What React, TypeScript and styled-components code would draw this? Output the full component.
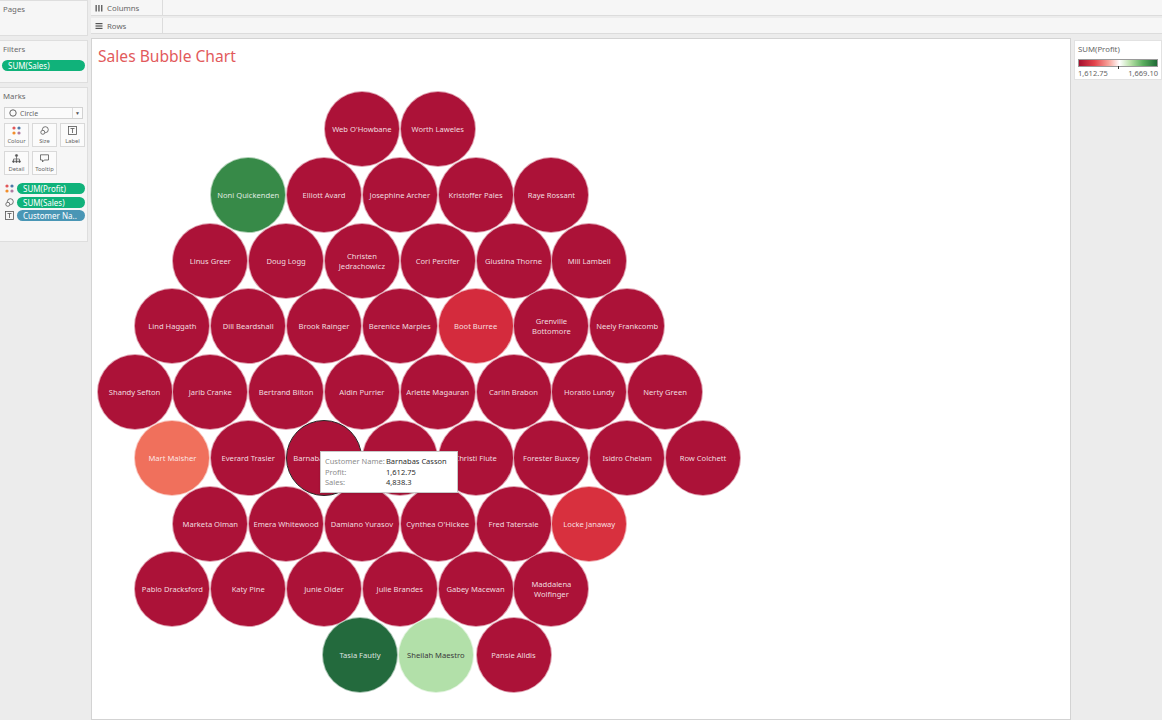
import React, { FC } from 'react'
import styled, { createGlobalStyle } from 'styled-components'

const GlobalStyle = createGlobalStyle`
  html, body {
    margin: 0;
    padding: 0;
    background: #ececec;
  }
  * {
    box-sizing: border-box;
  }
`

const Workspace = styled.div`
  display: flex;
  width: 1162px;
  height: 720px;
  overflow: hidden;
  background: #ececec;
  font-family: 'Noto Sans', 'Open Sans', sans-serif;
  color: #555;
`

const Sidebar = styled.aside`
  width: 88px;
  flex-shrink: 0;
  display: flex;
  flex-direction: column;
  gap: 4px;
`

const Card = styled.div<{ $height: number }>`
  height: ${p => p.$height}px;
  background: #f6f6f6;
  border: 1px solid #dedede;
  border-left: none;
  padding: 3px 2px 0 2px;
`

const CardTitle = styled.div`
  font-size: 7.8px;
  color: #6a6a6a;
  padding-left: 1px;
  margin-bottom: 6px;
`

const Pill = styled.div<{ $color: string }>`
  height: 11px;
  border-radius: 6px;
  background: ${p => p.$color};
  color: #fff;
  font-size: 8px;
  line-height: 11px;
  padding-left: 6px;
  white-space: nowrap;
  overflow: hidden;
`

const MarkSelect = styled.div`
  height: 12px;
  margin: 0 2px;
  border: 1px solid #d2d2d2;
  background: #fbfbfb;
  display: flex;
  align-items: center;
  font-size: 7px;
  color: #666;
  padding-left: 4px;
  gap: 3px;
`

const Caret = styled.span`
  margin-left: auto;
  width: 10px;
  height: 100%;
  border-left: 1px solid #dcdcdc;
  display: flex;
  align-items: center;
  justify-content: center;
  font-size: 5px;
  color: #555;
`

const MarkButtons = styled.div`
  display: grid;
  grid-template-columns: repeat(3, 25px);
  grid-auto-rows: 24px;
  gap: 4px 3px;
  margin: 4px 2px 0 2px;
`

const MarkButton = styled.div`
  border: 1px solid #d9d9d9;
  background: #fbfbfb;
  display: flex;
  flex-direction: column;
  align-items: center;
  justify-content: center;
  gap: 2px;
  font-size: 5.8px;
  color: #666;
`

const Encodings = styled.div`
  display: flex;
  flex-direction: column;
  gap: 2.5px;
  margin-top: 8px;
`

const EncodingRow = styled.div`
  display: flex;
  align-items: center;
  gap: 3px;
  padding-left: 3px;
  & > div {
    flex: 1;
  }
`

const Main = styled.div`
  flex: 1;
  display: flex;
  flex-direction: column;
  margin-left: 3px;
`

const Shelf = styled.div`
  height: 16px;
  display: flex;
  background: #f6f6f6;
  border-bottom: 1px solid #dcdcdc;
  margin-bottom: 2px;
`

const ShelfLabel = styled.div`
  width: 72px;
  display: flex;
  align-items: center;
  gap: 4px;
  padding-left: 4px;
  font-size: 7.8px;
  color: #666;
  border-right: 1px solid #dcdcdc;
`

const Body = styled.div`
  flex: 1;
  display: flex;
  gap: 3px;
  margin-top: 2px;
`

const ChartPane = styled.section`
  position: relative;
  width: 980px;
  background: #fff;
  border: 1px solid #d3d3d3;
  overflow: hidden;
`

const Title = styled.h1`
  margin: 0;
  padding: 6px 0 0 6px;
  font-weight: 400;
  font-size: 15.6px;
  color: #e25a5c;
  font-family: 'Noto Sans', 'Open Sans', sans-serif;
`

const Bubble = styled.div<{ $bg: string; $hover?: boolean }>`
  position: absolute;
  width: 76px;
  height: 76px;
  margin: -38px 0 0 -38px;
  border-radius: 50%;
  background: ${p => p.$bg};
  border: ${p => (p.$hover ? '1px solid #2a2a2a' : '1px solid rgba(255,255,255,0.6)')};
  display: flex;
  align-items: center;
  justify-content: center;
`

const BubbleLabel = styled.span<{ $dark?: boolean; $nowrap?: boolean }>`
  max-width: 67px;
  text-align: center;
  font-size: 7.6px;
  line-height: 10px;
  white-space: ${p => (p.$nowrap ? 'nowrap' : 'normal')};
  color: ${p => (p.$dark ? '#3a3a3a' : 'rgba(255,255,255,0.85)')};
`

const Tooltip = styled.div`
  position: absolute;
  left: 228px;
  top: 412px;
  width: 138px;
  height: 42px;
  background: #fff;
  border: 1px solid #c8c8c8;
  box-shadow: 0 1px 2px rgba(0, 0, 0, 0.12);
  padding: 4px 4px;
  display: grid;
  grid-template-columns: 61px 1fr;
  font-size: 7.5px;
  line-height: 10.5px;
`

const TipKey = styled.span`
  color: #8c8c8c;
`

const TipValue = styled.span`
  color: #2e2e2e;
`

const LegendPanel = styled.aside`
  flex: 1;
  display: flex;
  flex-direction: column;
`

const LegendCard = styled.div`
  height: 40px;
  margin-top: 2px;
  background: #fff;
  border: 1px solid #e2e2e2;
  padding: 3px 3px 0 3px;
`

const LegendTitle = styled.div`
  font-size: 7.8px;
  color: #666;
  margin-bottom: 5px;
`

const Ramp = styled.div`
  position: relative;
  height: 8px;
  border: 1px solid #9a9a9a;
  background: linear-gradient(90deg, #a50f2d 0%, #e3434b 20%, #f7a39a 38%, #ffffff 52%, #b8e0a8 66%, #5aae5e 82%, #1f6b36 100%);
  &::after {
    content: '';
    position: absolute;
    left: 50%;
    bottom: -3px;
    width: 1px;
    height: 3px;
    background: #333;
  }
`

const RampLabels = styled.div`
  display: flex;
  justify-content: space-between;
  font-size: 7.5px;
  color: #666;
  margin-top: 1px;
`

type Customer = { name: string; row: number; col: number; color?: string; dark?: boolean; hover?: boolean; hidden?: boolean }

const RED = '#ac1238'

const customers: Customer[] = [
  { name: "Web O'Howbane", row: 0, col: 6 },
  { name: 'Worth Laweles', row: 0, col: 8 },
  { name: 'Noni Quickenden', row: 1, col: 3, color: '#378a48' },
  { name: 'Elliott Avard', row: 1, col: 5 },
  { name: 'Josephine Archer', row: 1, col: 7 },
  { name: 'Kristoffer Pales', row: 1, col: 9 },
  { name: 'Raye Rossant', row: 1, col: 11 },
  { name: 'Linus Greer', row: 2, col: 2 },
  { name: 'Doug Logg', row: 2, col: 4 },
  { name: 'Christen Jedrachowicz', row: 2, col: 6 },
  { name: 'Cori Percifer', row: 2, col: 8 },
  { name: 'Giustina Thorne', row: 2, col: 10 },
  { name: 'Mill Lambell', row: 2, col: 12 },
  { name: 'Lind Haggath', row: 3, col: 1 },
  { name: 'Dill Beardshall', row: 3, col: 3 },
  { name: 'Brook Rainger', row: 3, col: 5 },
  { name: 'Berenice Marples', row: 3, col: 7 },
  { name: 'Boot Burree', row: 3, col: 9, color: '#d42b3d' },
  { name: 'Grenville Bottomore', row: 3, col: 11 },
  { name: 'Neely Frankcomb', row: 3, col: 13 },
  { name: 'Shandy Sefton', row: 4, col: 0 },
  { name: 'Jarib Cranke', row: 4, col: 2 },
  { name: 'Bertrand Bilton', row: 4, col: 4 },
  { name: 'Aldin Purrier', row: 4, col: 6 },
  { name: 'Arlette Magauran', row: 4, col: 8 },
  { name: 'Carlin Brabon', row: 4, col: 10 },
  { name: 'Horatio Lundy', row: 4, col: 12 },
  { name: 'Nerty Green', row: 4, col: 14 },
  { name: 'Mart Malsher', row: 5, col: 1, color: '#f0705c' },
  { name: 'Everard Trasler', row: 5, col: 3 },
  { name: 'Barnabas Casson', row: 5, col: 5, hover: true },
  { name: 'Irwin Beddow', row: 5, col: 7, hidden: true },
  { name: 'Christi Flute', row: 5, col: 9 },
  { name: 'Forester Buxcey', row: 5, col: 11 },
  { name: 'Isidro Chelam', row: 5, col: 13 },
  { name: 'Row Colchett', row: 5, col: 15 },
  { name: 'Marketa Olman', row: 6, col: 2 },
  { name: 'Emera Whitewood', row: 6, col: 4 },
  { name: 'Damiano Yurasov', row: 6, col: 6 },
  { name: "Cynthea O'Hickee", row: 6, col: 8 },
  { name: 'Fred Tatersale', row: 6, col: 10 },
  { name: 'Locke Janaway', row: 6, col: 12, color: '#d8303e' },
  { name: 'Pablo Dracksford', row: 7, col: 1 },
  { name: 'Katy Pine', row: 7, col: 3 },
  { name: 'Junie Older', row: 7, col: 5 },
  { name: 'Julie Brandes', row: 7, col: 7 },
  { name: 'Gabey Macewan', row: 7, col: 9 },
  { name: 'Maddalena Wolfinger', row: 7, col: 11 },
  { name: 'Tasia Fautly', row: 8, col: 5.95, color: '#236a3d' },
  { name: 'Sheilah Maestro', row: 8, col: 7.95, color: '#b2e0a9', dark: true },
  { name: 'Pansie Alldis', row: 8, col: 10 },
]

const ColourIcon = () => (
  <svg width="9" height="9" viewBox="0 0 9 9">
    <circle cx="2" cy="2" r="1.6" fill="#e15759" />
    <circle cx="7" cy="2" r="1.6" fill="#4e79a7" />
    <circle cx="2" cy="7" r="1.6" fill="#f28e2b" />
    <circle cx="7" cy="7" r="1.6" fill="#b07aa1" />
  </svg>
)

const SizeIcon = () => (
  <svg width="9" height="9" viewBox="0 0 9 9" fill="none" stroke="#555" strokeWidth="0.8">
    <circle cx="5.3" cy="3.7" r="3" />
    <circle cx="2.8" cy="6.3" r="2" fill="#fbfbfb" />
  </svg>
)

const LabelIcon = () => (
  <svg width="9" height="9" viewBox="0 0 9 9" fill="none" stroke="#555" strokeWidth="0.8">
    <rect x="0.5" y="0.5" width="8" height="8" />
    <path d="M2.5 2.5h4M4.5 2.5v4.5" />
  </svg>
)

const DetailIcon = () => (
  <svg width="9" height="9" viewBox="0 0 9 9" fill="#555" stroke="#555" strokeWidth="0.7">
    <circle cx="4.5" cy="1.5" r="1.1" />
    <path d="M4.5 2.5v2.5M1.5 5h6M1.5 5v1.5M4.5 5v1.5M7.5 5v1.5" fill="none" />
    <circle cx="1.5" cy="7.5" r="0.9" />
    <circle cx="4.5" cy="7.5" r="0.9" />
    <circle cx="7.5" cy="7.5" r="0.9" />
  </svg>
)

const TooltipIcon = () => (
  <svg width="9" height="9" viewBox="0 0 9 9" fill="none" stroke="#555" strokeWidth="0.8">
    <path d="M0.5 0.8h8v5.2H4.2L2.5 8V6H0.5z" />
  </svg>
)

const ColumnsIcon = () => (
  <svg width="8" height="8" viewBox="0 0 8 8" fill="#555">
    <rect x="0.5" y="1" width="1.3" height="6.5" />
    <rect x="3.3" y="1" width="1.3" height="6.5" />
    <rect x="6.1" y="1" width="1.3" height="6.5" />
  </svg>
)

const RowsIcon = () => (
  <svg width="8" height="8" viewBox="0 0 8 8" fill="#555">
    <rect x="0.5" y="1" width="7" height="1.2" />
    <rect x="0.5" y="3.4" width="7" height="1.2" />
    <rect x="0.5" y="5.8" width="7" height="1.2" />
  </svg>
)

const CircleGlyph = () => (
  <svg width="8" height="8" viewBox="0 0 8 8" fill="none" stroke="#555" strokeWidth="0.9">
    <circle cx="4" cy="4" r="3.2" />
  </svg>
)

const App: FC = () => {
  return (
    <Workspace>
      <GlobalStyle />
      <Sidebar>
        <Card $height={36}>
          <CardTitle>Pages</CardTitle>
        </Card>
        <Card $height={43}>
          <CardTitle>Filters</CardTitle>
          <Pill $color="#10b27a">SUM(Sales)</Pill>
        </Card>
        <Card $height={155}>
          <CardTitle>Marks</CardTitle>
          <MarkSelect>
            <CircleGlyph />
            Circle
            <Caret>▼</Caret>
          </MarkSelect>
          <MarkButtons>
            <MarkButton><ColourIcon />Colour</MarkButton>
            <MarkButton><SizeIcon />Size</MarkButton>
            <MarkButton><LabelIcon />Label</MarkButton>
            <MarkButton><DetailIcon />Detail</MarkButton>
            <MarkButton><TooltipIcon />Tooltip</MarkButton>
          </MarkButtons>
          <Encodings>
            <EncodingRow>
              <ColourIcon />
              <Pill $color="#10b27a">SUM(Profit)</Pill>
            </EncodingRow>
            <EncodingRow>
              <SizeIcon />
              <Pill $color="#10b27a">SUM(Sales)</Pill>
            </EncodingRow>
            <EncodingRow>
              <LabelIcon />
              <Pill $color="#4996b5">Customer Na..</Pill>
            </EncodingRow>
          </Encodings>
        </Card>
      </Sidebar>
      <Main>
        <Shelf>
          <ShelfLabel><ColumnsIcon />Columns</ShelfLabel>
        </Shelf>
        <Shelf>
          <ShelfLabel><RowsIcon />Rows</ShelfLabel>
        </Shelf>
        <Body>
          <ChartPane>
            <Title>Sales Bubble Chart</Title>
            {customers.map(c => (
              <Bubble
                key={c.name}
                $bg={c.color ?? RED}
                $hover={c.hover}
                style={{ left: 42.5 + c.col * 37.9, top: 90 + c.row * 65.75 }}
              >
                {!c.hidden && (
                  <BubbleLabel $dark={c.dark} $nowrap={c.hover}>
                    {c.name}
                  </BubbleLabel>
                )}
              </Bubble>
            ))}
            <Tooltip>
              <TipKey>Customer Name:</TipKey>
              <TipValue>Barnabas Casson</TipValue>
              <TipKey>Profit:</TipKey>
              <TipValue>1,612.75</TipValue>
              <TipKey>Sales:</TipKey>
              <TipValue>4,838.3</TipValue>
            </Tooltip>
          </ChartPane>
          <LegendPanel>
            <LegendCard>
              <LegendTitle>SUM(Profit)</LegendTitle>
              <Ramp />
              <RampLabels>
                <span>1,612.75</span>
                <span>1,669.10</span>
              </RampLabels>
            </LegendCard>
          </LegendPanel>
        </Body>
      </Main>
    </Workspace>
  )
}

export default App
